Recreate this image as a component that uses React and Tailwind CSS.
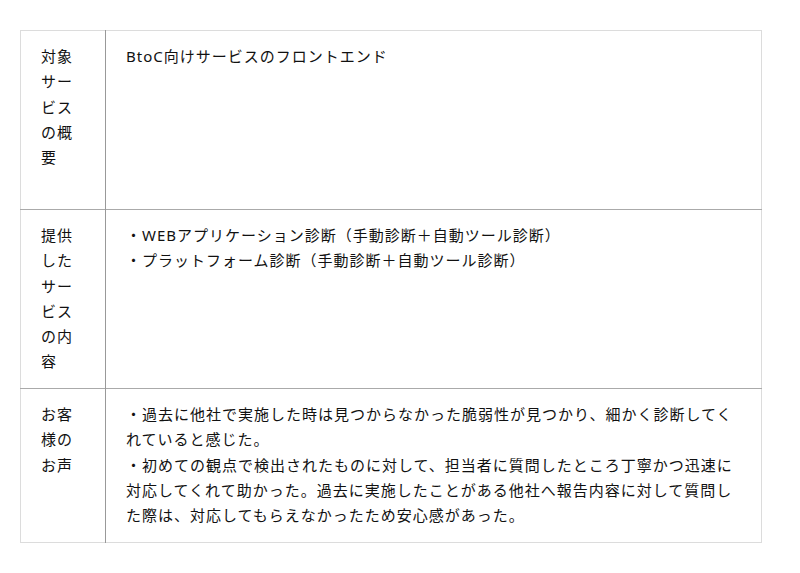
const ROWS = [
  {
    label: '対象サービスの概要',
    body: ['BtoC向けサービスのフロントエンド'],
    h: 'h-[179px]',
  },
  {
    label: '提供したサービスの内容',
    body: [
      '・WEBアプリケーション診断（手動診断＋自動ツール診断）',
      '・プラットフォーム診断（手動診断＋自動ツール診断）',
    ],
    h: 'h-[179px]',
  },
  {
    label: 'お客様のお声',
    body: [
      '・過去に他社で実施した時は見つからなかった脆弱性が見つかり、細かく診断してくれていると感じた。',
      '・初めての観点で検出されたものに対して、担当者に質問したところ丁寧かつ迅速に対応してくれて助かった。過去に実施したことがある他社へ報告内容に対して質問した際は、対応してもらえなかったため安心感があった。',
    ],
    h: 'h-[154px]',
  },
]

export default function App() {
  return (
    <div className="min-h-[573px] bg-white pt-[30px] pl-[20px] text-[#111] font-['Noto_Sans','Noto_Sans_CJK_JP',sans-serif] text-[15px] leading-[25.3px] tracking-[1px]">
      <table className="w-[742px] border-collapse border border-[#dcdcdc] table-fixed">
        <tbody>
          {ROWS.map((r, i) => (
            <tr key={i} className={`${r.h} ${i < ROWS.length - 1 ? 'border-b border-b-[#aaa]' : ''}`}>
              <td className="w-[85px] align-top px-5 pt-[13px] pb-[13px] border-r border-r-[#999]">
                {r.label}
              </td>
              <td className="align-top px-5 pt-[13px] pb-[13px]">
                {r.body.map((t, j) => (
                  <p key={j}>{t}</p>
                ))}
              </td>
            </tr>
          ))}
        </tbody>
      </table>
    </div>
  )
}
